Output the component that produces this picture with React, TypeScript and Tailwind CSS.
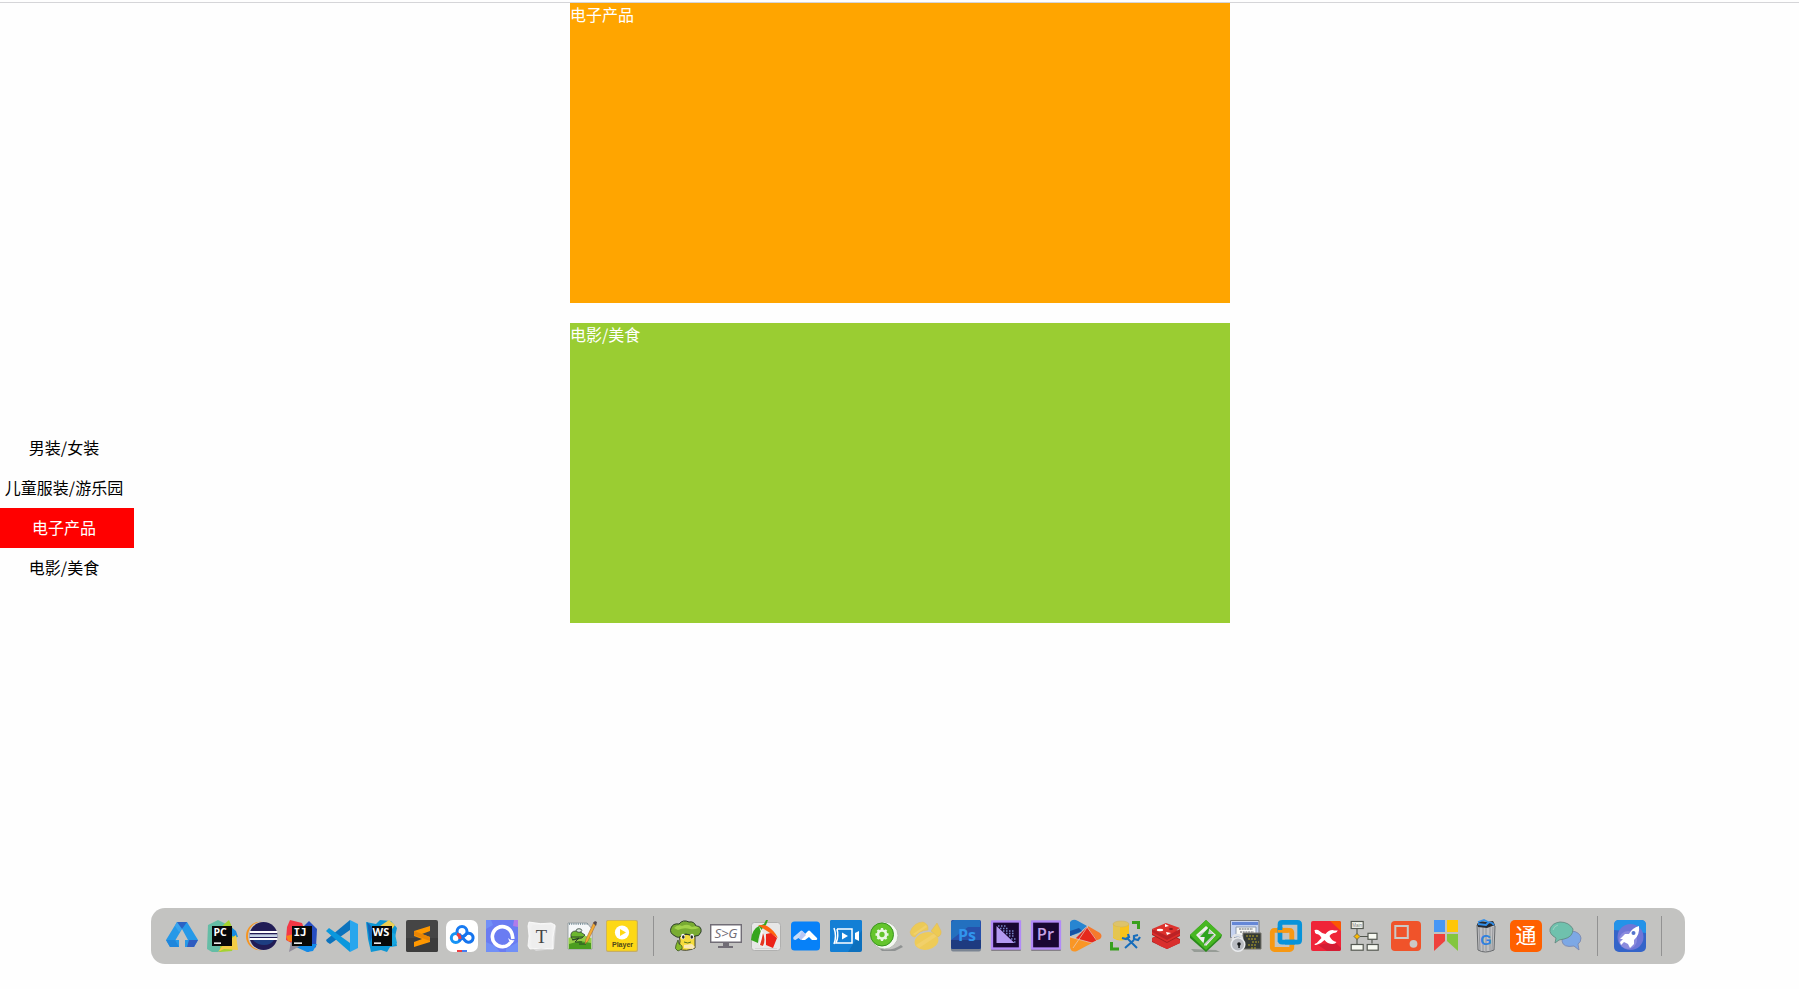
import type { ReactNode } from "react";

function Icon({ children }: { children: ReactNode }) {
  return (
    <svg viewBox="0 0 32 32" className="block h-8 w-8 shrink-0 overflow-visible">
      {children}
    </svg>
  );
}

const sans = "Open Sans, Noto Sans, sans-serif";

const editors: ReactNode[] = [
  <>
    <path d="M11 2h10l11 18-4 7h-9v-7h3L16 9 9.500 20H13v7H4L0 20z" fill="#2699e8" />
    <path d="M11 2h10l-5 7-3-1z" fill="#2b62c4" />
    <path d="M0 20h9l4 7H4z" fill="#1f86dc" />
    <path d="M32 20h-9l-2 7h7z" fill="#2f5cc0" />
    <path d="M11 2l-2 4 4 6 3-3z" fill="#3aa5ee" />
  </>,
  <>
    <path d="M2 5l10-5 8 4 4 12-9 16H6l-5-3z" fill="#64bda6" />
    <path d="M15 7l8-7 3 7 5 9-5 15-12 1z" fill="#a4d32f" />
    <path d="M25 7l5 4 2 6-7-1z" fill="#158ce0" />
    <path d="M17 25l13-10 2 15-14-1-6 3z" fill="#f2cc45" />
    <rect x="6" y="6" width="20" height="20" fill="#080808" />
    <text x="7.5" y="16" fontFamily={sans} fontSize="10.5" fontWeight="700" fill="#fff">PC</text>
    <rect x="8" y="22.4" width="7" height="1.5" fill="#fff" />
  </>,
  <>
    <ellipse cx="14" cy="16" rx="14" ry="14.3" fill="#f7941e" />
    <ellipse cx="16.5" cy="16" rx="14.5" ry="14.5" fill="#c5c6c8" />
    <circle cx="17.5" cy="16" r="14" fill="#211c55" />
    <path d="M7 20h21q-3 5-10 5T7 20" fill="#1d3e81" />
    <path d="M3.8 11h27.500v2H3.800zM3.500 18h28v2h-28z" fill="#fff" />
    <path d="M3.500 14.300h28v2.700h-28z" fill="#c6d3e6" />
  </>,
  <>
    <path d="M4 0l12 3 3 8L9 25 0 20l1-13z" fill="#f43745" />
    <path d="M0 16l8-2 1 8-7-1z" fill="#f98118" />
    <path d="M16 8l7-7 8 8-1 18-8 5-10-6z" fill="#254dc0" />
    <path d="M15 24h16l-4 7-6 1-11-5z" fill="#118be9" />
    <path d="M5 22l9 4-11 6z" fill="#928d9b" />
    <rect x="6" y="6" width="20" height="20" fill="#080808" />
    <text x="7.500" y="16" fontFamily="DejaVu Sans Mono, monospace" fontSize="11" fontWeight="700" fill="#fff">IJ</text>
    <rect x="8" y="22.4" width="8" height="1.5" fill="#fff" />
  </>,
  <>
    <path d="M24 0v10L4 24l-3-2-1-2z" fill="#0c73bd" />
    <path d="M3 8l21 15v9L0 11z" fill="#0b98dd" />
    <path d="M24 0l8 4v24l-8 4z" fill="#29a6ed" />
  </>,
  <>
    <path d="M0 2l10 2 4-4 11 1 6 7-2 9 2 9-7 1-3 5-6-2-10 2-3-13z" fill="#0c96d5" />
    <path d="M1 2l8 8-5 12z" fill="#1264b8" />
    <path d="M14 6l9-6 6 5-3 4z" fill="#efce50" />
    <path d="M23 11l6 3 2 9-6 4z" fill="#16a6df" />
    <rect x="6" y="6" width="20" height="20" fill="#080808" />
    <text x="6.6" y="16" fontFamily={sans} fontSize="11" fontWeight="700" fill="#fff">WS</text>
    <rect x="8" y="22.4" width="7" height="1.5" fill="#fff" />
  </>,
  <>
    <rect width="32" height="32" rx="2" fill="#454545" />
    <path d="M0 18h32v12q0 2-2 2H2q-2 0-2-2z" fill="#3c3c3c" />
    <path d="M8 11l16-5v5l-8 3 8 3v5L8 27v-5l8-3-8-3z" fill="#ff9800" />
    <path d="M8 11l16 6v4L8 15z" fill="#e98505" />
  </>,
  <>
    <rect width="32" height="32" rx="7" fill="#fff" />
    <g fill="none" strokeWidth="3">
      <circle cx="16" cy="11.500" r="5" stroke="#187bf2" />
      <circle cx="9.800" cy="18" r="4.500" stroke="#1593f5" />
      <path d="M13 14l6 6.500a4.500 4.500 0 1 0 .5-6L13 21" stroke="#1574ee" />
      <path d="M11 14q3 1 3 5" stroke="#ef3d3e" />
    </g>
    <path d="M11 30h5v2h-5z" fill="#ef3e41" />
    <path d="M16 30h5v2h-5z" fill="#467bf0" />
  </>,
  <>
    <rect width="32" height="32" fill="#6a7cf2" />
    <path d="M0 9l7-4-2-5H0zM0 22l9 4 5 6H0zM20 29l12-7v10H20z" fill="#718ff7" />
    <path d="M32 0v7l-5-1 1-6z" fill="#b17bea" />
    <path d="M24.500 22.500a10 10 0 1 1 1.500-8.500l1 5" fill="none" stroke="#fff" strokeWidth="3.600" />
    <path d="M22 18q3 3 6.500 2-1 3-4 4z" fill="#fff" />
  </>,
  <>
    <path d="M3 2l23 2 4 2-2 23-18 2-7-5z" fill="#dadada" />
    <path d="M3 2q12 3 22 1l4 2q-3 12-2 24-12-2-23 0L2 26q2-10 0-20z" fill="#f1f1f1" stroke="#fff" strokeWidth=".8" />
    <rect x="5.5" y="5" width="20" height="23" rx="2" fill="#eee" />
    <text x="15.500" y="22.700" textAnchor="middle" fontFamily="Liberation Serif, serif" fontSize="18.500" fill="#444">T</text>
  </>,
  <>
    <path d="M2 3h19l5 6v20H2z" fill="#f5f7f8" stroke="#8a959b" strokeWidth=".8" />
    <path d="M2.5 18q10-6 23 0v11h-23z" fill="#96cf49" />
    <path d="M3 24l11-3 11 2v6H3z" fill="#4a9d1f" />
    <path d="M3 4h19" stroke="#657d87" strokeWidth="1.3" strokeDasharray="1 1.2" />
    <path d="M5 17q-1-6 5-6l2-1 4 3 3 2-3 3-4 1-5 1z" fill="#6cb72f" stroke="#334435" strokeWidth=".8" />
    <ellipse cx="13" cy="10.500" rx="2.800" ry="1.800" fill="#dce9dc" stroke="#34443a" strokeWidth=".8" />
    <path d="M5 17h12m-11 3l7-2-4 4h7m-3 2h7" fill="none" stroke="#253e25" strokeWidth=".9" />
    <path d="M28 2l2 2-8 17-3 3 1-5z" fill="#f5ad31" stroke="#a46a35" strokeWidth=".6" />
    <path d="M27 3l2-2 2 1-1 4z" fill="#52484d" />
  </>,
  <>
    <rect x="0" y="0" width="32" height="32" rx="2" fill="#c5ad67" />
    <rect x=".8" y=".8" width="30" height="30" rx="1.5" fill="#fdd816" />
    <circle cx="16" cy="12.5" r="7.1" fill="#fff" />
    <path d="M14 9l6 3.500-6 3.500z" fill="#ffd914" />
    <text x="16.500" y="27.300" textAnchor="middle" fontFamily="Liberation Sans, sans-serif" fontSize="7" fontWeight="700" fill="#4d461b">Player</text>
  </>,
];

const tools: ReactNode[] = [
  <>
    <path d="M9 14l1 7-1 8q7 3 16-1V15z" fill="#f5dc3c" stroke="#3e4026" />
    <path d="M5 16Q-1 13 1 8q2-5 8-4 4-5 10-2 5-1 7 4 6 0 5 6-2 5-6 4-3 3-5-1-4-2-8 0-3 4-7 1" fill="#79ac32" stroke="#2d3e2a" />
    <path d="M4 8q4-4 8-2 6-3 10 1 5-2 7 1-6 2-9 1-6-2-12 1z" fill="#a2d24a" />
    <ellipse cx="13" cy="16.500" rx="2" ry="2.700" fill="#fff" />
    <ellipse cx="22" cy="16.500" rx="2" ry="2.700" fill="#fff" />
    <ellipse cx="13.300" cy="17" rx="1.300" ry="1.800" fill="#282b26" />
    <ellipse cx="21.800" cy="17" rx="1.300" ry="1.800" fill="#282b26" />
    <path d="M14 22q4 2 7 0" fill="none" stroke="#577320" />
    <path d="M14 25l8-1 3 3-2 2-9-1z" fill="#fae8b6" />
    <path d="M8 20l1 4q4 1 3 5l-4 2q-4-2-2-6z" fill="#87bb2a" stroke="#3c5526" strokeWidth=".8" />
  </>,
  <>
    <path d="M13 22h6v4h4v2H8v-2h5z" fill="#716d76" />
    <path d="M.7 4.700h30.600v17.600H.7z" fill="#fff" stroke="#716d76" strokeWidth="1.4" />
    <text x="16" y="18" textAnchor="middle" textLength="23" fontFamily={sans} fontSize="13.500" fontStyle="italic" fill="#716d76">S&gt;G</text>
  </>,
  <>
    <rect x="1.500" y="2.500" width="29" height="28" rx="3" fill="#e7e7e7" stroke="#a6a6a6" strokeWidth=".8" />
    <path d="M5 28.500h22" stroke="#d4d4d4" />
    <path d="M1 20q1-11 8-14l5-2 2-4h2l-2 5-4 4q-3 5-4 14z" fill="#36a51d" />
    <path d="M8 5q7 0 9 1 7 4 11 12l-8-5z" fill="#ff6610" />
    <path d="M9 6l2 6-2 13 5 2q2-8 0-13z" fill="#f8f8f8" />
    <path d="M13 13q3 7 0 13l-3-1q2-6 3-12" fill="#e43722" />
    <path d="M16 14l5-1 6 5-4 10-7-3z" fill="#ec2218" />
  </>,
  <>
    <rect x="1" y="1.5" width="29" height="29" rx="3.5" fill="#0781f8" />
    <path d="M3.500 17l7-6q1-1 2 0l4 4-5 5-3-2-3 2q-3 0-2-3" fill="#c7ddf9" />
    <path d="M12 17l6-6q1-1 2 0l7 7q1 2-2 2h-3l-3-3-4 3h-3z" fill="#fff" />
    <path d="M12 11l4 4-5 5-2-2z" fill="#b8c6f4" />
  </>,
  <>
    <rect width="32" height="32" rx="2" fill="#0d70bd" />
    <path d="M2 0h28q2 0 2 2v8L18 32H2q-2 0-2-2V2q0-2 2-2" fill="#137fd5" />
    <path d="M4 8q3 8 0 16M7 9h15v14H6q3-7 1-14" fill="none" stroke="#fff" strokeWidth="1.5" />
    <path d="M29 11v10l-4-2v-6z" fill="#fff" />
    <path d="M12 12.500l6 3.500-6 3.500z" fill="#fff" />
  </>,
  <>
    <path d="M8 27q11 6 23-2l2 2-8 4H12z" fill="#8f9292" />
    <circle cx="14.5" cy="15.5" r="13.5" fill="#f4f7f1" stroke="#b9bdb6" />
    <circle cx="12" cy="14.5" r="11.5" fill="#64c52c" stroke="#399420" />
    <circle cx="12" cy="14.5" r="4" fill="none" stroke="#e9f6e3" strokeWidth="2.700" />
    <path d="M12 8v2M12 19v2M5.500 14.500h2M16.500 14.500h2M7.500 10l1.500 1.500M15 17.500l1.500 1.500M16.500 10L15 11.500M9 17.500L7.500 19" stroke="#e9f6e3" strokeWidth="2.300" />
  </>,
  <>
    <ellipse cx="16.5" cy="21" rx="12" ry="8.800" fill="#eecb58" transform="rotate(-12 16.500 21)" />
    <path d="M6 25l19-12 2 3-18 12z" fill="#f1d06a" />
    <path d="M0 12Q4 2 13 2q6 2 5 8Q8 11 5 17 1 17 0 12" fill="#ecca57" stroke="#e3bc61" strokeWidth=".5" />
    <path d="M3 14L16 5l1 2-12 8" fill="#f1d06a" />
    <path d="M21 11l6-8 4 8q1 4-3 6z" fill="#edca53" stroke="#dfb65a" strokeWidth=".5" />
  </>,
  <>
    <rect x="1" y="2" width="30" height="29.500" rx="2" fill="#7a8492" />
    <rect x="1" y="0" width="30" height="29" rx="1.5" fill="#2750ab" />
    <path d="M1 2l3-2h26v7H18L1 20z" fill="#2370bf" />
    <path d="M1 20h30v7q0 2-2 2H3q-2 0-2-2z" fill="#1e3b80" />
    <text x="17" y="20.800" textAnchor="middle" fontFamily={sans} fontSize="16" fontWeight="700" fill="#3195ed">Ps</text>
  </>,
  <>
    <rect x="1" y="1.5" width="30" height="29.500" rx="1" fill="#858087" />
    <rect x="2" y="1.500" width="28" height="27" fill="#190733" stroke="#b28af8" strokeWidth="2.300" />
    <path d="M6.500 6v17h18z" fill="#b39af2" />
    <path d="M8 6h8m-6 2.500h9m-6 2.500h11m-8 2.500h9m-6 2.500h6m-4 3h5m-2 3h3" stroke="#7786c9" strokeWidth="1.5" strokeDasharray="1.5 1.5" />
  </>,
  <>
    <rect x="1" y="1.5" width="30" height="29.500" rx="1" fill="#858087" />
    <rect x="2" y="1.500" width="28" height="27" fill="#190733" stroke="#b28af8" strokeWidth="2.300" />
    <text x="15.500" y="20.300" textAnchor="middle" fontFamily={sans} fontSize="16.500" fontWeight="600" fill="#c4a3e5">Pr</text>
  </>,
  <>
    <path d="M0 2q3-4 8-1l9 5-8 7-9 3z" fill="#2785d1" />
    <path d="M0 11l9-3 3 3-12 5z" fill="#1752a3" />
    <path d="M18 6l12 7q3 3 0 6l-8 3-9-9z" fill="#f57a2c" />
    <path d="M5 19L17 7l10 13-8 4z" fill="#e5291c" />
    <path d="M0 17l22 6-15 8q-6 2-7-4z" fill="#f99625" />
    <path d="M3 28L18 6M0 17l22 6M17 7l10 14" fill="none" stroke="#e5cec0" strokeWidth=".7" />
  </>,
  <>
    <path d="M3 4v14q8 5 16 0V4z" fill="#fac319" />
    <ellipse cx="11" cy="4" rx="8" ry="3" fill="#ddc36a" stroke="#cbb465" strokeWidth=".6" />
    <path d="M3 5v12q3 3 7 3V7q-5 0-7-2" fill="#e4c550" />
    <path d="M22 2.500h6.500v6.500M1.500 22v7H9" fill="none" stroke="#38a01d" strokeWidth="3" />
    <path d="M15 28l9-8M17 18l10 10" stroke="#176dbb" strokeWidth="2" />
    <path d="M18 14l1 3-3 2-4-1M28 15l-4 1v3l4 1 2-3" fill="none" stroke="#176dbb" strokeWidth="2.200" />
  </>,
  <>
    <path d="M2 22l15 7 13-6v-4L16 12 2 18z" fill="#a71e20" />
    <path d="M2 21q7 5 15 8l13-6v-3L16 13 2 18z" fill="#d92f2d" />
    <path d="M2 15l15 8 13-7v-4L16 6 2 11z" fill="#a42020" />
    <path d="M2 14l15 8 13-7v-3L16 5 2 11z" fill="#dd2d2b" />
    <path d="M2 9l14-6 14 5-13 8z" fill="#dd312c" />
    <path d="M2 9v3l15 8 13-7V9l-13 7z" fill="#bb2225" />
    <ellipse cx="10" cy="10" rx="3.2" ry="1.2" fill="#fff" />
    <path d="M15 4l4 2-4 1zM16 12l5 1-4 2z" fill="#fff" />
    <ellipse cx="21" cy="9" rx="2" ry="1" fill="#87191d" />
  </>,
  <>
    <path d="M1 29l25 1 4 2H4z" fill="#969c96" />
    <path d="M16 0l16 15-1 3-15 14L0 18v-3z" fill="#298a1b" />
    <path d="M16 0l16 15-16 15L0 15z" fill="#47b721" />
    <path d="M16 6l10 9-10 11L6 15z" fill="#efefed" />
    <path d="M19 9l6 7-11 10V17l-6-2z" fill="#c4c9c4" />
    <path d="M20 6L10 17h5l-2 8 11-11h-6z" fill="#2ea41e" />
  </>,
  <>
    <path d="M.5.500h28.500v17H.5z" fill="#c5d2f0" stroke="#74787f" />
    <path d="M2 2h26v3H2z" fill="#6587d7" />
    <path d="M6 7h20v9H6z" fill="#f8f8f5" stroke="#8b99ae" />
    <path d="M9 9h14M10 12h14" stroke="#60646b" strokeWidth="1" strokeDasharray="2 .7" />
    <path d="M13 13h18v16H13z" fill="#353a36" stroke="#77756d" />
    <path d="M16 16h8m2 0h3m-11 3h8m-4 3h7m-11 3h8m-5 3h5" stroke="#b7a626" strokeDasharray="2 1" />
    <path d="M3 20q-1-5 4-5 6 0 5 6" fill="none" stroke="#e0e2e6" strokeWidth="2.5" />
    <circle cx="8" cy="24.5" r="6.800" fill="#b8bbc1" stroke="#e9ebee" strokeWidth="1.5" />
    <circle cx="9" cy="24" r="1.800" fill="#15181b" />
    <path d="M8.300 24h1.500v4H8.300z" fill="#15181b" />
  </>,
  <>
    <rect x="2.300" y="10.300" width="19.500" height="19.200" rx="2" fill="none" stroke="#f79812" strokeWidth="4.800" />
    <path d="M10 22V4.500Q10 2.400 12.300 2.400H27.500Q29.700 2.400 29.700 4.600V20q0 2.200-2.200 2.200H12.300q-2.200 0-2.200-2.200" fill="none" stroke="#0793da" strokeWidth="4.700" />
    <path d="M8 10.300h10" stroke="#f79812" strokeWidth="4.800" />
    <path d="M10 7v3M15 22.200h10" stroke="#0793da" strokeWidth="4.700" />
  </>,
  <>
    <rect x="1" y="1" width="30" height="30" rx="2" fill="#ef2438" />
    <path d="M20 1h9q2 0 2 2v8z" fill="#fb5703" />
    <path d="M25 22l6 6q0 3-2 3H17l-9-6z" fill="#d41c33" />
    <path d="M4.500 10q3-1 5 1 3 3 6 3 3-4 7-4 4 1 5 0 0 3-4 3-3 1-4 3 2 5 7 6-1 2-4 2-5 0-8-4-3 3-6 4-4 2-4 0 3-1 5-4l2-2q-2-4-5-4-2-1-2-4" fill="#fff" />
  </>,
  <>
    <path d="M7 9v6m0 3v7m3-8.500h12m0 3v4" stroke="#51564d" strokeWidth="1.1" fill="none" />
    <g fill="#f8faf2" stroke="#555952" strokeWidth="1.2">
      <rect x="1.2" y="1.5" width="12" height="7" />
      <rect x="18" y="13.3" width="9" height="6" />
      <rect x="1.2" y="24.5" width="12" height="5.700" />
      <rect x="17.2" y="24.5" width="11" height="5.700" />
    </g>
    <path d="M7 13.500l3 3-3 3-3-3z" fill="#fbb900" stroke="#555952" strokeWidth=".8" />
    <text x="7.200" y="6.500" textAnchor="middle" fontFamily="Liberation Sans, sans-serif" fontSize="4.500" fill="#777">Main</text>
  </>,
  <>
    <rect x="1" y="1" width="30" height="30" rx="4" fill="#f0532a" />
    <rect x="5.300" y="6" width="12.500" height="12" fill="none" stroke="#cbc8c4" strokeWidth="2" />
    <circle cx="23.500" cy="23.800" r="3.900" fill="#cbc8c4" />
  </>,
  <>
    <path d="M4 0h11v12H4z" fill="#4797f6" />
    <path d="M17 0h11v12H17z" fill="#ffc607" />
    <path d="M4 14h11v7L4 31z" fill="#ef413e" />
    <path d="M17 14h11v17L17 21z" fill="#83c63f" />
  </>,
  <>
    <path d="M7 5q8-4 18 1l-1 24q-9 4-16 0z" fill="#c1c1c3" stroke="#66696c" />
    <path d="M9 7l1 23m3-23v24m3-24v24m4-24v24m3-24l-1 23" stroke="#94969a" strokeWidth="1" />
    <path d="M7 4l3-3 7 1 6-1 2 4-8 3-9-1z" fill="#282b30" />
    <path d="M8 2l6-2 4 2 4 1 2 2M8 4l8 1 3-3" fill="none" stroke="#3490ea" strokeWidth="1.8" />
    <text x="16" y="24.500" textAnchor="middle" fontFamily="Liberation Sans, sans-serif" fontSize="14.500" fontWeight="700" fill="#3182df">G</text>
  </>,
  <>
    <rect width="32" height="32" rx="5" fill="#ff6000" />
    <text x="16" y="23.300" textAnchor="middle" fontFamily="Noto Sans CJK SC, sans-serif" fontSize="21" fill="#fff">通</text>
  </>,
  <>
    <path d="M22 11q8 1 9 7 0 4-3 6l1 6-5-4q-11 2-12-5 0-8 10-10" fill="#7da8e5" stroke="#7583ad" strokeWidth=".8" />
    <path d="M5 23l1-5Q-1 14 0 9 2 3 10 2q9 0 13 7 0 8-9 10l-5 1z" fill="#6fc1ad" stroke="#60847c" strokeWidth=".8" />
    <path d="M3 10q1-4 5-5" fill="none" stroke="#a0d2c3" />
  </>,
];

const launcher = (
  <>
    <rect width="32" height="32" rx="5" fill="#3464c9" />
    <path d="M0 10V5q0-5 5-5h22q5 0 5 5v8z" fill="#2493e8" />
    <circle cx="16.5" cy="17" r="13" fill="#6f76d7" />
    <circle cx="14" cy="20" r="9" fill="#8b8bdd" />
    <path d="M25 6q1 9-5 14v4l-4 4-2-4-4-2-3 3-1-3 3-3H6l5-5h4q3-6 10-8" fill="#fff" />
    <circle cx="19.500" cy="13" r="2" fill="#5374cc" />
  </>
);

function Separator() {
  return (
    <div className="flex h-10 w-8 shrink-0 justify-center pr-px">
      <span className="h-full w-px bg-[#929292]" />
    </div>
  );
}

function IconGroup({ icons }: { icons: ReactNode[] }) {
  return <div className="flex gap-2">{icons.map((icon, i) => <Icon key={i}>{icon}</Icon>)}</div>;
}

const categories = ["男装/女装", "儿童服装/游乐园", "电子产品", "电影/美食"];

export default function App() {
  return (
    <div className="relative h-[989px] w-[1799px] overflow-hidden bg-[#fefefe] pt-0.5 font-['Noto_Sans_CJK_SC',sans-serif] text-base text-black">
      <div className="h-px bg-[#d5d5d8]" />
      <main className="ml-[570px] flex w-[660px] flex-col gap-5 leading-[22px] text-white">
        <section className="h-[300px] bg-[orange]">电子产品</section>
        <section className="h-[300px] bg-[yellowgreen]">电影/美食</section>
      </main>
      <nav className="absolute left-0 top-[428px] w-[134px] text-center leading-[38px]">
        {categories.map((name) => (
          <div key={name} className={name === "电子产品" ? "h-10 bg-[red] pr-1.5 text-white" : "h-10 pr-1.5"}>
            {name}
          </div>
        ))}
      </nav>
      <footer className="absolute left-[151px] top-[908px] flex h-14 w-[1534px] items-center rounded-[14px] bg-[#c3c3c1] pl-[15px]">
        <IconGroup icons={editors} />
        <Separator />
        <IconGroup icons={tools} />
        <Separator />
        <Icon>{launcher}</Icon>
        <Separator />
      </footer>
    </div>
  );
}
